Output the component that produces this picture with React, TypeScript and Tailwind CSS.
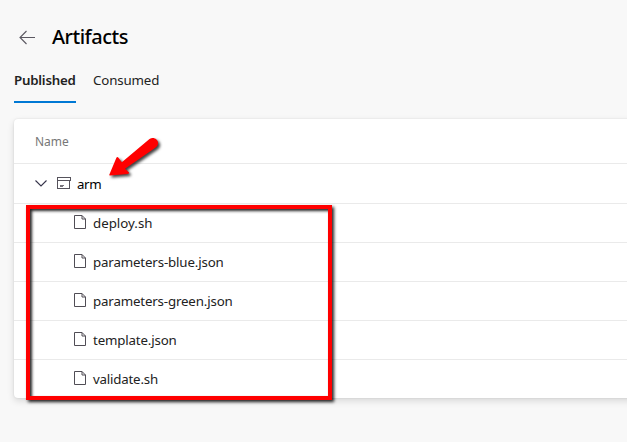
const files = [
  { name: 'deploy.sh', tracking: 'tracking-[0px]' },
  { name: 'parameters-blue.json', tracking: 'tracking-[-0.15px]' },
  { name: 'parameters-green.json', tracking: 'tracking-[-0.16px]' },
  { name: 'template.json', tracking: 'tracking-[-0.16px]' },
  { name: 'validate.sh', tracking: 'tracking-[-0.2px]' },
];

function BackIcon() {
  return (
    <svg className="mt-px h-4 w-4" viewBox="0 0 16 16" fill="none" stroke="#5b5861" strokeWidth="1.1">
      <path d="M16 7.5H1M7.5 1L1 7.5L7.5 14" />
    </svg>
  );
}

function ChevronIcon() {
  return (
    <svg className="h-[7px] w-3" viewBox="0 0 12 7" fill="none" stroke="#35334a" strokeWidth="1.1">
      <path d="M0.5 0.5L6 6L11.5 0.5" />
    </svg>
  );
}

function ArchiveIcon() {
  return (
    <svg className="mb-0.5 block h-3 w-3.5" viewBox="0 0 14 12" fill="none" stroke="#56535c" shapeRendering="crispEdges">
      <path d="M0.5 0.5H13.5V3.5H0.5ZM0.5 3.5V11.5H12.5V3.5" />
      <path d="M3 8H7V9H6V10H3Z" fill="#77747c" stroke="none" />
    </svg>
  );
}

function FileIcon() {
  return (
    <svg className="mb-0.5 h-3.5 w-3" viewBox="0 0 12 14" fill="none" stroke="#504d55">
      <path d="M0.5 0.5H8L11.5 4V13.5H0.5ZM8 0.5V4H11.5" />
    </svg>
  );
}

function Arrow() {
  return (
    <svg
      className="absolute left-[100px] top-[130px] h-[60px] w-[70px] drop-shadow-[2px_2px_1.5px_rgba(0,0,0,0.75)]"
      viewBox="0 0 70 60"
      fill="#ff0000"
    >
      <path d="M9.3 44.7L16.4 27.8Q17.3 26.2 18.5 27.8L21.8 32.2L49.5 9C54 5.8 60.2 10.6 57.4 15.4Q56.8 16.6 55 18L25 38.7L28.8 42.2Q29.6 43.6 27.8 43.9L9.9 45.5Q8.9 45.5 9.3 44.7Z" />
    </svg>
  );
}

export default function App() {
  return (
    <div className="relative h-[442px] w-[627px] overflow-hidden bg-[#f8f8f8] font-['Noto_Sans','Open_Sans',sans-serif] text-[13.3px] text-[#222]">
      <header className="flex h-[60px] items-center gap-[17px] pl-[19px] pt-[14px]">
        <BackIcon />
        <h1 className="text-[20px] font-medium leading-7 tracking-[-0.5px] text-black">Artifacts</h1>
      </header>
      <nav className="flex h-[43px] gap-[17px] pl-3.5 leading-5">
        <div className="w-[62px] whitespace-nowrap border-b-2 border-[#0078d4] pt-[10px] font-semibold tracking-[-0.22px]">Published</div>
        <div className="whitespace-nowrap pt-[10px] tracking-[-0.15px]">Consumed</div>
      </nav>
      <main className="ml-3.5 mt-4 h-[279px] w-[640px] rounded bg-white shadow-[0_3px_7px_rgba(0,0,0,0.13),0_0_2px_rgba(0,0,0,0.11)]">
        <div className="flex h-[45px] items-center border-b border-[#eaeaea] pl-[21px] pt-0.5 text-[12px] text-[#777]">Name</div>
        <div className="flex h-10 items-center border-b border-[#eaeaea] pl-[21px]">
          <ChevronIcon />
          <span className="ml-[10px]"><ArchiveIcon /></span>
          <span className="ml-[6px] pt-0.5 tracking-[-0.4px] text-black">arm</span>
        </div>
        {files.map((file) => (
          <div key={file.name} className="flex h-[39px] items-center gap-[7px] border-b border-[#eaeaea] pl-[60px] last:border-transparent">
            <FileIcon />
            <span className={`pt-0.5 ${file.tracking}`}>{file.name}</span>
          </div>
        ))}
      </main>
      <div className="absolute left-[26px] top-[205px] h-[195px] w-[306px] border-4 border-[#ff0000] shadow-[2px_2px_3px_rgba(0,0,0,0.85),inset_2px_2px_3px_rgba(0,0,0,0.85)]" />
      <Arrow />
    </div>
  );
}
